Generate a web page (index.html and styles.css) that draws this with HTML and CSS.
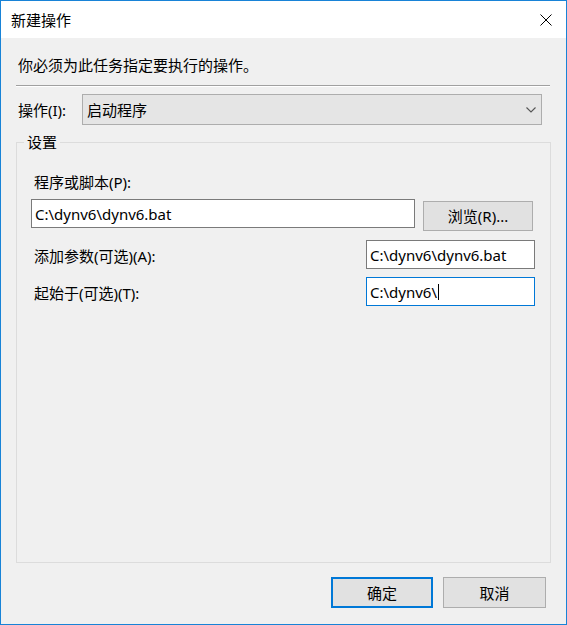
FILE: index.html
```html
<!DOCTYPE html>
<html lang="zh-CN">
<head>
<meta charset="utf-8">
<title>新建操作</title>
<link rel="stylesheet" href="styles.css">
</head>
<body>
<div class="window">
  <div class="titlebar">
    <span class="title">新建操作</span>
    <svg class="close" width="12" height="12" viewBox="0 0 12 12"><path d="M0.5 0.5 L11.5 11.5 M11.5 0.5 L0.5 11.5" stroke="#000" stroke-width="1" fill="none"/></svg>
  </div>
  <div class="body">
    <p class="instruction">你必须为此任务指定要执行的操作。</p>
    <div class="separator"></div>
    <div class="action-row">
      <label class="action-label">操作(I):</label>
      <div class="combo">
        <span class="combo-text">启动程序</span>
        <svg class="chevron" width="10" height="6" viewBox="0 0 10 6"><path d="M0.5 0.5 L5 5 L9.5 0.5" stroke="#555" stroke-width="1.1" fill="none"/></svg>
      </div>
    </div>
    <fieldset class="group">
      <legend class="group-title">设置</legend>
      <div class="field-label">程序或脚本(P):</div>
      <div class="row row-program">
        <div class="textbox textbox-program">C:\dynv6\dynv6.bat</div>
        <button class="btn btn-browse">浏览(R)...</button>
      </div>
      <div class="row row-arg">
        <div class="row-label">添加参数(可选)(A):</div>
        <div class="textbox textbox-small">C:\dynv6\dynv6.bat</div>
      </div>
      <div class="row row-start">
        <div class="row-label">起始于(可选)(T):</div>
        <div class="textbox textbox-small focused">C:\dynv6\<span class="caret"></span></div>
      </div>
    </fieldset>
    <div class="footer">
      <button class="btn btn-ok">确定</button>
      <button class="btn btn-cancel">取消</button>
    </div>
  </div>
</div>
</body>
</html>
```
FILE: styles.css
```css
html, body {
  margin: 0;
  padding: 0;
}
body {
  width: 567px;
  height: 625px;
  overflow: hidden;
}
.window {
  box-sizing: border-box;
  width: 567px;
  height: 625px;
  border: 1px solid #1883d7;
  display: flex;
  flex-direction: column;
  font: 15px/20px "Noto Sans", "Noto Sans CJK SC", sans-serif;
  color: #000;
}
.titlebar {
  height: 37px;
  flex: 0 0 37px;
  background: #fff;
  display: flex;
  align-items: center;
  justify-content: space-between;
  padding: 0 14px 0 10px;
}
.close {
  display: block;
}
.body {
  flex: 1;
  min-height: 0;
  background: #f0f0f0;
  display: flex;
  flex-direction: column;
  padding: 0 15px 16px;
}
.instruction {
  margin: 17px 0 0 2px;
  height: 20px;
}
.separator {
  margin: 10px 1px 0 0;
  height: 0;
  border-top: 1px solid #a0a0a0;
  border-bottom: 1px solid #fff;
}
.action-row {
  margin-top: 7px;
  height: 31px;
  display: flex;
  align-items: center;
}
.action-label {
  box-sizing: border-box;
  flex: 0 0 66px;
  padding-left: 2px;
}
.combo {
  box-sizing: border-box;
  width: 460px;
  height: 31px;
  border: 1px solid #adadad;
  background: #e5e5e5;
  display: flex;
  align-items: center;
  justify-content: space-between;
  padding: 0 5px 0 4px;
}
.chevron {
  display: block;
}
.group {
  flex: 1;
  min-width: 0;
  margin: 7px 0 0;
  padding: 0 15px 0 14px;
  border: 1px solid #dcdcdc;
}
.group-title {
  padding: 0 3px;
  margin-left: -7px;
  line-height: 20px;
}
.field-label {
  margin-top: 20px;
  padding-left: 3px;
  height: 20px;
}
.row {
  display: flex;
  align-items: flex-start;
  justify-content: space-between;
}
.row-program {
  margin-top: 7px;
}
.row-arg {
  margin-top: 9px;
}
.row-start {
  margin-top: 8px;
}
.row-label {
  padding: 6px 0 0 3px;
  height: 20px;
}
.textbox {
  box-sizing: border-box;
  height: 29px;
  border: 1px solid #7a7a7a;
  background: #fff;
  padding: 0 3px;
  display: flex;
  align-items: center;
  white-space: nowrap;
}
.textbox-program {
  width: 384px;
}
.textbox-small {
  width: 169px;
}
.focused {
  border-color: #0078d7;
}
.caret {
  display: inline-block;
  width: 1px;
  height: 16px;
  background: #000;
  margin-left: 1px;
}
.btn {
  box-sizing: border-box;
  height: 31px;
  border: 1px solid #adadad;
  background: #e1e1e1;
  font: inherit;
  color: #000;
  padding: 0;
  margin: 0;
}
.btn-browse {
  width: 110px;
  height: 30px;
  margin: 2px 2px 0 0;
}
.footer {
  display: flex;
  justify-content: flex-end;
  gap: 10px;
  margin-top: 14px;
  padding-right: 5px;
}
.btn-ok {
  width: 102px;
  border: 2px solid #0078d7;
}
.btn-cancel {
  width: 103px;
}
```
